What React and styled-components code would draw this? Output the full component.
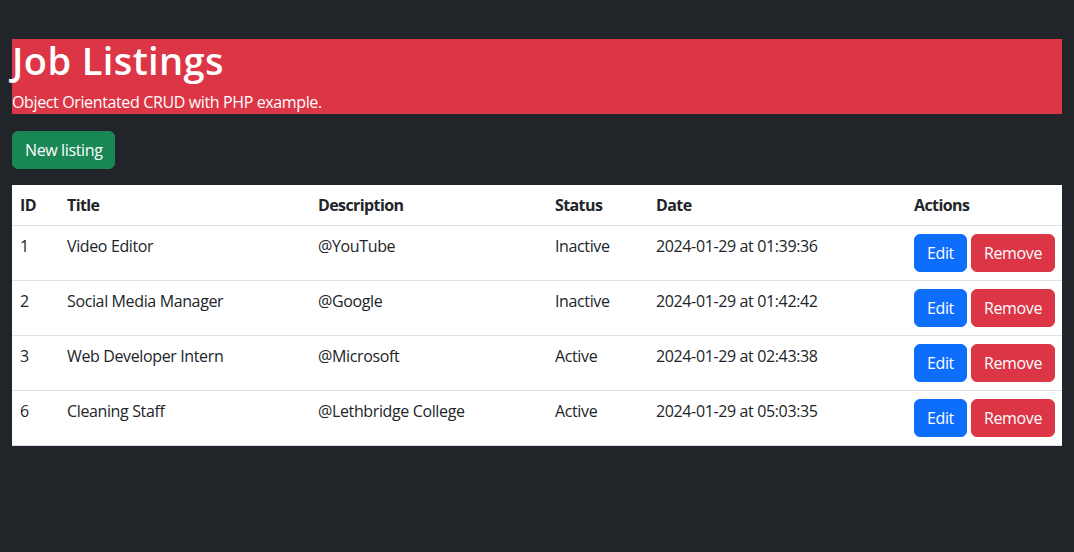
import React from "react";
import styled, { createGlobalStyle } from "styled-components";

const Global = createGlobalStyle`
  html, body { margin: 0; padding: 0; }
  body {
    background: #212529;
    font-family: "Open Sans", "Liberation Sans", sans-serif;
    font-size: 16px;
    line-height: 1.5;
    letter-spacing: -0.37px;
    color: #212529;
  }
  * { box-sizing: border-box; }
`;

const Page = styled.div`
  padding: 39px 12px 0;
`;

const Banner = styled.header`
  background: #dc3545;
  color: #fff;
  height: 75px;
  display: flex;
  flex-direction: column;
  justify-content: space-between;
`;

const Title = styled.h1`
  margin: 0;
  font-size: 38px;
  font-weight: 600;
  letter-spacing: 0.4px;
  line-height: 42px;
`;

const Subtitle = styled.p`
  margin: 0;
  font-size: 16px;
  line-height: 24px;
`;

const Btn = styled.button`
  font-family: inherit;
  font-size: 16px;
  letter-spacing: -0.37px;
  line-height: 24px;
  padding: 6px 12px;
  border: 1px solid ${(p) => p.$bg};
  border-radius: 6px;
  background: ${(p) => p.$bg};
  color: #fff;
  cursor: pointer;
  height: 38px;
`;

const Toolbar = styled.div`
  margin: 17px 0 16px;
  display: flex;
`;

const Table = styled.table`
  width: 100%;
  border-collapse: collapse;
  table-layout: fixed;
  background: #fff;
`;

const Th = styled.th`
  text-align: left;
  font-weight: 700;
  letter-spacing: -0.6px;
  padding: 8px;
  line-height: 24px;
  border-bottom: 1px solid #dee2e6;
  vertical-align: bottom;
`;

const Td = styled.td`
  padding: 8px;
  line-height: 24px;
  border-bottom: 1px solid #dee2e6;
  vertical-align: top;
  white-space: nowrap;
`;

const Actions = styled.div`
  display: flex;
  gap: 4px;
`;

const cols = [47, 251, 237, 101, 258, 156];

const rows = [
  { id: 1, title: "Video Editor", desc: "@YouTube", status: "Inactive", date: "2024-01-29 at 01:39:36" },
  { id: 2, title: "Social Media Manager", desc: "@Google", status: "Inactive", date: "2024-01-29 at 01:42:42" },
  { id: 3, title: "Web Developer Intern", desc: "@Microsoft", status: "Active", date: "2024-01-29 at 02:43:38" },
  { id: 6, title: "Cleaning Staff", desc: "@Lethbridge College", status: "Active", date: "2024-01-29 at 05:03:35" },
];

export default function App() {
  return (
    <>
      <Global />
      <Page>
        <Banner>
          <Title>Job Listings</Title>
          <Subtitle>Object Orientated CRUD with PHP example.</Subtitle>
        </Banner>
        <Toolbar>
          <Btn $bg="#198754">New listing</Btn>
        </Toolbar>
        <Table>
          <colgroup>
            {cols.map((w, i) => (
              <col key={i} style={{ width: w }} />
            ))}
          </colgroup>
          <thead>
            <tr>
              <Th>ID</Th>
              <Th>Title</Th>
              <Th>Description</Th>
              <Th>Status</Th>
              <Th>Date</Th>
              <Th>Actions</Th>
            </tr>
          </thead>
          <tbody>
            {rows.map((r) => (
              <tr key={r.id}>
                <Td>{r.id}</Td>
                <Td>{r.title}</Td>
                <Td>{r.desc}</Td>
                <Td>{r.status}</Td>
                <Td>{r.date}</Td>
                <Td>
                  <Actions>
                    <Btn $bg="#0d6efd">Edit</Btn>
                    <Btn $bg="#dc3545">Remove</Btn>
                  </Actions>
                </Td>
              </tr>
            ))}
          </tbody>
        </Table>
      </Page>
    </>
  );
}
